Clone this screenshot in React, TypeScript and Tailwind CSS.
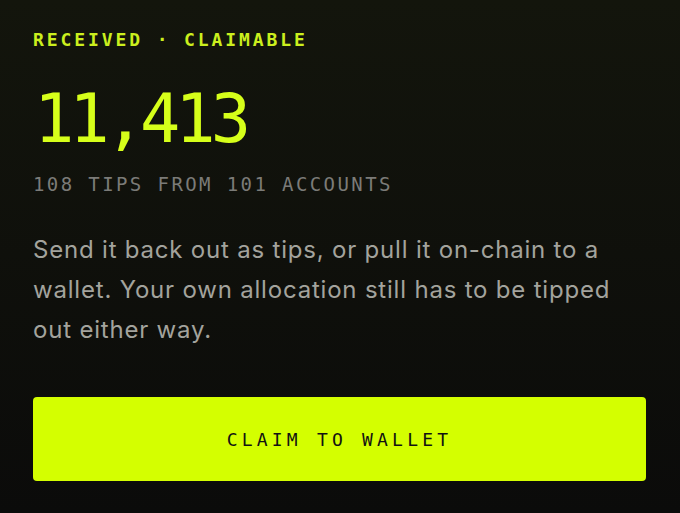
export default function App() {
  return (
    <div className="min-h-[513px] w-full bg-gradient-to-b from-[#13150c] to-[#0b0b0a] px-[33px] pt-[29px] pb-[31px]">
      <p className="font-['DejaVu_Sans_Mono',monospace] text-[18px] leading-[22px] font-bold tracking-[2.9px] text-[#cbef1e]">
        RECEIVED · CLAIMABLE
      </p>
      <h1 className="mt-[35px] ml-[1px] font-['DejaVu_Sans_Mono',monospace] text-[67px] leading-[67px] tracking-[-5px] text-[#d6ff1a]">
        11,413
      </h1>
      <p className="mt-[19px] font-['DejaVu_Sans_Mono',monospace] text-[19px] leading-[24px] tracking-[2.4px] text-[#7b7b78]">
        108 TIPS FROM 101 ACCOUNTS
      </p>
      <p className="mt-[34px] max-w-[615px] font-['Inter',sans-serif] text-[24px] leading-[40px] tracking-[0.8px] text-[#a3a39d]">
        Send it back out as tips, or pull it on-chain to a wallet. Your own allocation still has to be tipped out either way.
      </p>
      <button
        type="button"
        className="mt-[47px] flex h-[84px] w-[613px] items-center justify-center rounded-[4px] bg-[#d4ff00] font-['DejaVu_Sans_Mono',monospace] text-[18px] tracking-[4.2px] text-[#121212]"
      >
        CLAIM TO WALLET
      </button>
    </div>
  );
}
